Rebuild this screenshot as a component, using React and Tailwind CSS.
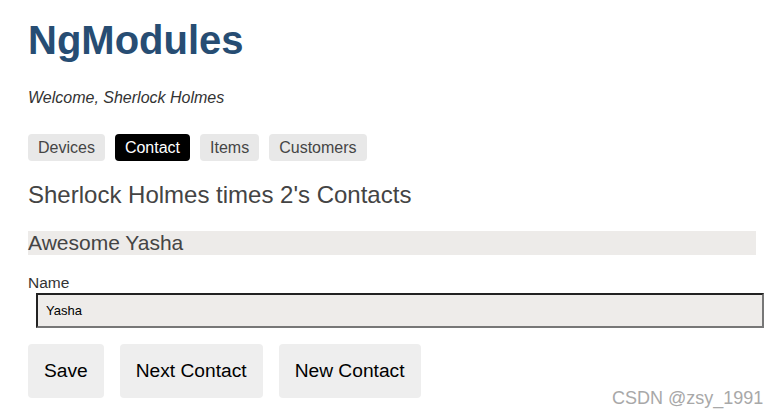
import React, { useState } from 'react'

const NAV = ['Devices', 'Contact', 'Items', 'Customers']

function App() {
  const [page, setPage] = useState('Contact')
  const [name, setName] = useState('Yasha')

  return (
    <div className="relative w-full h-[418px] bg-white overflow-hidden font-['Liberation_Sans',Arial,sans-serif] pl-[28px] pr-[26px]">
      <h1 className="pt-[17px] text-[40px] leading-[46px] font-bold text-[#274d73]">NgModules</h1>

      <p className="mt-[26px] text-[16px] leading-[18px] italic text-[#333]">Welcome, Sherlock Holmes</p>

      <nav className="mt-[27px] flex gap-[10px]">
        {NAV.map(item => (
          <button
            key={item}
            onClick={() => setPage(item)}
            className={`h-[27px] px-[10px] rounded-[4px] text-[16px] leading-[27px] ${
              page === item ? 'bg-black text-white' : 'bg-[#e8e8e8] text-[#454545]'
            }`}
          >
            {item}
          </button>
        ))}
      </nav>

      <h2 className="mt-[20px] text-[24px] leading-[28px] text-[#444]">Sherlock Holmes times 2's Contacts</h2>

      <h3 className="mt-[22px] h-[24px] bg-[#edebe9] text-[21px] leading-[24px] text-[#444]">Awesome Yasha</h3>

      <label className="block mt-[19px] text-[15.5px] leading-[18px] text-[#333]">Name</label>
      <input
        value={name}
        onChange={e => setName(e.target.value)}
        className="block mt-[1px] ml-[8px] w-[728px] h-[35px] px-[8px] bg-[#eeecea] text-[13px] text-black border-[2px] border-t-[#222] border-l-[#222] border-r-[#777] border-b-[#777] outline-none"
      />

      <div className="mt-[16px] flex gap-[16px]">
        <button className="h-[54px] px-[16px] rounded-[4px] bg-[#eeeeee] text-[19.2px] text-black">Save</button>
        <button className="h-[54px] px-[16px] rounded-[4px] bg-[#eeeeee] text-[19.2px] text-black">Next Contact</button>
        <button className="h-[54px] px-[16px] rounded-[4px] bg-[#eeeeee] text-[19.2px] text-black">New Contact</button>
      </div>

      <div className="absolute left-[612px] top-[388px] text-[18px] leading-[20px] text-[#a8a8a8]">CSDN @zsy_1991</div>
    </div>
  )
}

export default App
